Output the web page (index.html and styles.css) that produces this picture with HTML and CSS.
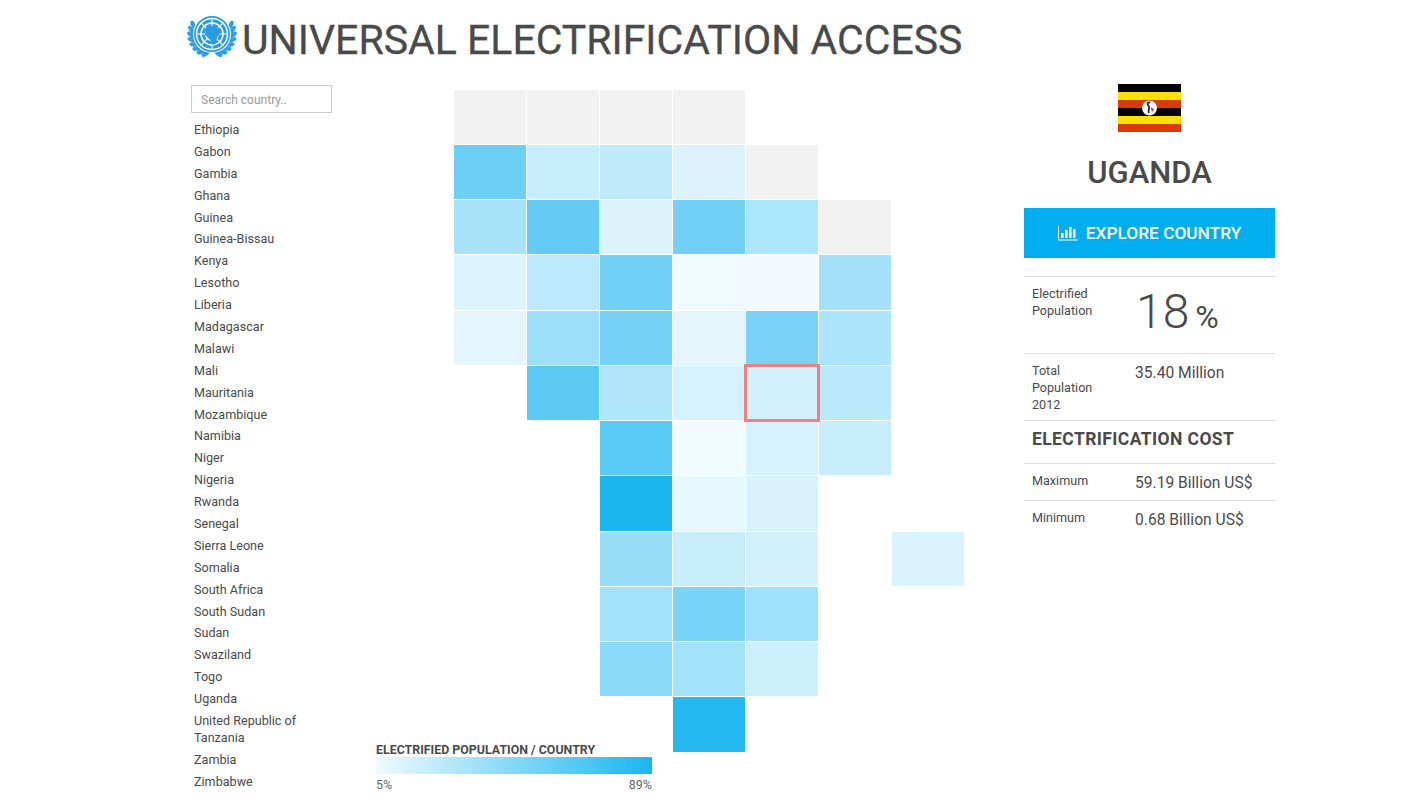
FILE: index.html
```html
<!DOCTYPE html>
<html lang="en">
<head>
<meta charset="UTF-8" />
<meta name="viewport" content="width=device-width, initial-scale=1" />
<title>Universal Electrification Access</title>
<link rel="stylesheet" href="styles.css">
</head>
<body>

<div class="page">
  <header class="top">
    <svg class="logo" viewBox="0 0 52 45" aria-label="United Nations emblem">
      <g fill="#2f9fe4">
        <ellipse cx="26" cy="-2" rx="2.200" ry="4.500" transform="rotate(64 26 19) rotate(-40 26 -2)"/>
        <ellipse cx="26" cy="-2" rx="2.200" ry="4.500" transform="rotate(78 26 19) rotate(-40 26 -2)"/>
        <ellipse cx="26" cy="-2" rx="2.200" ry="4.500" transform="rotate(92 26 19) rotate(-40 26 -2)"/>
        <ellipse cx="26" cy="-2" rx="2.200" ry="4.500" transform="rotate(106 26 19) rotate(-40 26 -2)"/>
        <ellipse cx="26" cy="-2" rx="2.200" ry="4.500" transform="rotate(120 26 19) rotate(-40 26 -2)"/>
        <ellipse cx="26" cy="-2" rx="2.200" ry="4.500" transform="rotate(134 26 19) rotate(-40 26 -2)"/>
        <ellipse cx="26" cy="-2" rx="2.200" ry="4.500" transform="rotate(148 26 19) rotate(-40 26 -2)"/>
        <ellipse cx="26" cy="-2" rx="2.200" ry="4.500" transform="rotate(162 26 19) rotate(-40 26 -2)"/>
        <ellipse cx="26" cy="-2" rx="2.200" ry="4.500" transform="rotate(-64 26 19) rotate(40 26 -2)"/>
        <ellipse cx="26" cy="-2" rx="2.200" ry="4.500" transform="rotate(-78 26 19) rotate(40 26 -2)"/>
        <ellipse cx="26" cy="-2" rx="2.200" ry="4.500" transform="rotate(-92 26 19) rotate(40 26 -2)"/>
        <ellipse cx="26" cy="-2" rx="2.200" ry="4.500" transform="rotate(-106 26 19) rotate(40 26 -2)"/>
        <ellipse cx="26" cy="-2" rx="2.200" ry="4.500" transform="rotate(-120 26 19) rotate(40 26 -2)"/>
        <ellipse cx="26" cy="-2" rx="2.200" ry="4.500" transform="rotate(-134 26 19) rotate(40 26 -2)"/>
        <ellipse cx="26" cy="-2" rx="2.200" ry="4.500" transform="rotate(-148 26 19) rotate(40 26 -2)"/>
        <ellipse cx="26" cy="-2" rx="2.200" ry="4.500" transform="rotate(-162 26 19) rotate(40 26 -2)"/>
      </g>
      <circle cx="26" cy="19" r="19" fill="#fff"/>
      <circle cx="26" cy="19" r="18" fill="#2a9be0"/>
      <g fill="none" stroke="#fff">
        <circle cx="26" cy="19" r="15.500" stroke-width="1.500"/>
        <circle cx="26" cy="19" r="11" stroke-width="1.500"/>
        <circle cx="26" cy="19" r="6.500" stroke-width="1.300"/>
        <path d="M26 3v32M10 19h32M14.700 7.700l22.600 22.600M37.300 7.700L14.700 30.300" stroke-width="1.100"/>
      </g>
      <path d="M20 13l6-2 6 2 2 5-3 5-2 6-3 1-2-6-5-4z" fill="#2a9be0"/>
    </svg>
    <h1 class="title">UNIVERSAL ELECTRIFICATION ACCESS</h1>
  </header>

  <div class="content">
    <aside class="sidebar">
      <input class="search" type="text" placeholder="Search country..">
      <ul class="countries">
        <li>Ethiopia</li>
        <li>Gabon</li>
        <li>Gambia</li>
        <li>Ghana</li>
        <li>Guinea</li>
        <li>Guinea-Bissau</li>
        <li>Kenya</li>
        <li>Lesotho</li>
        <li>Liberia</li>
        <li>Madagascar</li>
        <li>Malawi</li>
        <li>Mali</li>
        <li>Mauritania</li>
        <li>Mozambique</li>
        <li>Namibia</li>
        <li>Niger</li>
        <li>Nigeria</li>
        <li>Rwanda</li>
        <li>Senegal</li>
        <li>Sierra Leone</li>
        <li>Somalia</li>
        <li>South Africa</li>
        <li>South Sudan</li>
        <li>Sudan</li>
        <li>Swaziland</li>
        <li>Togo</li>
        <li>Uganda</li>
        <li>United Republic of Tanzania</li>
        <li>Zambia</li>
        <li>Zimbabwe</li>
      </ul>
    </aside>

    <main class="map">
      <div class="tiles">
        <!-- row 1 -->
        <div class="tile nodata"></div><div class="tile nodata"></div><div class="tile nodata"></div><div class="tile nodata"></div><div></div><div></div><div></div>
        <!-- row 2 -->
        <div class="tile" style="background:#6fd0f5"></div><div class="tile" style="background:#c8edfc"></div><div class="tile" style="background:#c0e9fa"></div><div class="tile" style="background:#dcf3fd"></div><div class="tile nodata"></div><div></div><div></div>
        <!-- row 3 -->
        <div class="tile" style="background:#a8e2f9"></div><div class="tile" style="background:#64cbf5"></div><div class="tile" style="background:#dcf3fc"></div><div class="tile" style="background:#72cff5"></div><div class="tile" style="background:#ace6fb"></div><div class="tile nodata"></div><div></div>
        <!-- row 4 -->
        <div class="tile" style="background:#dcf4fe"></div><div class="tile" style="background:#bce9fb"></div><div class="tile" style="background:#70d0f6"></div><div class="tile" style="background:#f0faff"></div><div class="tile" style="background:#f3fbfe"></div><div class="tile" style="background:#a4e1f9"></div><div></div>
        <!-- row 5 -->
        <div class="tile" style="background:#e5f6fe"></div><div class="tile" style="background:#9ee0fa"></div><div class="tile" style="background:#76d1f6"></div><div class="tile" style="background:#e4f5fc"></div><div class="tile" style="background:#7ad3f6"></div><div class="tile" style="background:#ace5fb"></div><div></div>
        <!-- row 6 -->
        <div></div><div class="tile" style="background:#5cc9f4"></div><div class="tile" style="background:#afe6fa"></div><div class="tile" style="background:#d5f1fd"></div><div class="tile selected" style="background:#d2f0fc"></div><div class="tile" style="background:#bce9fa"></div><div></div>
        <!-- row 7 -->
        <div></div><div></div><div class="tile" style="background:#59c9f5"></div><div class="tile" style="background:#f1faff"></div><div class="tile" style="background:#d5f1fd"></div><div class="tile" style="background:#c8edfc"></div><div></div>
        <!-- row 8 -->
        <div></div><div></div><div class="tile" style="background:#1ab6f0"></div><div class="tile" style="background:#e6f7fe"></div><div class="tile" style="background:#d8f2fd"></div><div></div><div></div>
        <!-- row 9 -->
        <div></div><div></div><div class="tile" style="background:#98def9"></div><div class="tile" style="background:#c8edfb"></div><div class="tile" style="background:#d2f0fc"></div><div></div><div class="tile" style="background:#dbf3fd"></div>
        <!-- row 10 -->
        <div></div><div></div><div class="tile" style="background:#a2e2fb"></div><div class="tile" style="background:#78d3f7"></div><div class="tile" style="background:#9fe0fa"></div><div></div><div></div>
        <!-- row 11 -->
        <div></div><div></div><div class="tile" style="background:#8adbf9"></div><div class="tile" style="background:#a2e2fb"></div><div class="tile" style="background:#cdeffc"></div><div></div><div></div>
        <!-- row 12 -->
        <div></div><div></div><div></div><div class="tile" style="background:#26b9f1"></div><div></div><div></div><div></div>
      </div>

      <div class="legend">
        <div class="legend-title">ELECTRIFIED POPULATION / COUNTRY</div>
        <div class="legend-bar"></div>
        <div class="legend-labels"><span>5%</span><span>89%</span></div>
      </div>
    </main>

    <section class="details">
      <svg class="flag" viewBox="0 0 63 48" aria-label="Flag of Uganda">
        <rect width="63" height="8" y="0" fill="#000"/>
        <rect width="63" height="8" y="8" fill="#fce100"/>
        <rect width="63" height="8" y="16" fill="#d93a06"/>
        <rect width="63" height="8" y="24" fill="#000"/>
        <rect width="63" height="8" y="32" fill="#fce100"/>
        <rect width="63" height="8" y="40" fill="#d93a06"/>
        <circle cx="31.500" cy="24" r="7.500" fill="#fff"/>
        <path d="M32 18.500c-2.500-.5-3 1.500-2 2.500 1 1.500 2 2 1 4-.5 1.500-1 2.500 0 4" fill="none" stroke="#222" stroke-width="1.800"/>
        <path d="M32.500 23l3.500 2-2 3z" fill="#d93a06"/>
      </svg>
      <h2 class="country-name">UGANDA</h2>
      <a class="explore" href="#">
        <svg class="explore-icon" viewBox="0 0 20 16">
          <path d="M.5 1v14H20" fill="none" stroke="#fff" stroke-width="1"/>
          <path d="M3 8h2.500v5H3zM7 5h2.500v8H7zM11 2h2.500v11H11zM15 4h2.500v9H15z" fill="#fff"/>
        </svg>
        EXPLORE COUNTRY
      </a>
      <div class="row row-rate">
        <div class="label">Electrified Population</div>
        <div class="rate">18<span class="rate-unit">%</span></div>
      </div>
      <div class="row row-total">
        <div class="label">Total Population 2012</div>
        <div class="value">35.40 Million</div>
      </div>
      <h3 class="cost-title">ELECTRIFICATION COST</h3>
      <div class="row row-cost">
        <div class="label">Maximum</div>
        <div class="value">59.19 Billion US$</div>
      </div>
      <div class="row row-cost row-last">
        <div class="label">Minimum</div>
        <div class="value">0.68 Billion US$</div>
      </div>
    </section>
  </div>
</div>

</body>
</html>
```

FILE: styles.css
```css
* {
  box-sizing: border-box;
}
body {
  margin: 0;
  background-color: #fff;
  color: #4a4a4a;
  font-family: Roboto, "Liberation Sans", sans-serif;
  overflow: hidden;
}
.page {
  width: 1089px;
  margin-left: 186px;
}
.top {
  display: flex;
  align-items: flex-start;
  gap: 4px;
  height: 84px;
  padding-top: 15px;
}
.logo {
  width: 52px;
  height: 45px;
  flex: none;
}
.title {
  margin: 1px 0 0;
  font-size: 41px;
  font-weight: 400;
  line-height: 48px;
  white-space: nowrap;
  -webkit-text-stroke: .3px #4a4a4a;
}
.content {
  display: flex;
}

/* country list */
.sidebar {
  width: 141px;
  margin: 1px 0 0 5px;
  flex: none;
}
.search {
  display: block;
  width: 141px;
  height: 28px;
  padding: 1px 9px 0;
  border: 1px solid #ccc;
  font-family: inherit;
  font-size: 12px;
  color: #4a4a4a;
  outline: none;
}
.search::placeholder {
  color: #999;
  opacity: 1;
}
.countries {
  list-style: none;
  margin: 8px 0 0;
  padding: 0 0 0 3px;
  font-size: 12.6px;
  line-height: 17px;
}
.countries li {
  margin-bottom: 4.9px;
}

/* tile map */
.map {
  position: relative;
  width: 561px;
  margin: 5.7px 0 0 0;
  padding-left: 122px;
  flex: none;
}
.tiles {
  display: grid;
  grid-template-columns: repeat(7, 72px);
  grid-auto-rows: 54.25px;
  gap: 1px;
}
.tile {
  background-color: #ccc;
}
.nodata {
  background-color: #f1f1f1;
}
.selected {
  outline: 3px solid #ee8080;
  outline-offset: -1px;
  position: relative;
}
.legend {
  position: absolute;
  left: 44px;
  top: 653px;
  width: 276px;
}
.legend-title {
  font-size: 12.4px;
  font-weight: 700;
  line-height: 14px;
}
.legend-bar {
  height: 17px;
  background: linear-gradient(90deg, #effaff, #1ab6f0);
}
.legend-labels {
  display: flex;
  justify-content: space-between;
  margin-top: 4px;
  font-size: 12.5px;
  line-height: 14px;
  color: #666;
}

/* right column */
.details {
  width: 251px;
  margin-left: auto;
  flex: none;
}
.flag {
  display: block;
  width: 63px;
  height: 48px;
  margin: 0 auto;
}
.country-name {
  margin: 23px 0 18px;
  font-size: 31px;
  font-weight: 500;
  line-height: 35px;
  text-align: center;
}
.explore {
  display: flex;
  align-items: center;
  justify-content: center;
  gap: 8px;
  height: 50px;
  margin-bottom: 18px;
  background-color: #00aeef;
  color: #fff;
  font-size: 17.3px;
  font-weight: 500;
  text-decoration: none;
}
.explore-icon {
  width: 20px;
  height: 16px;
}
.row {
  display: grid;
  grid-template-columns: 103px 1fr;
  padding-left: 8px;
  border-top: 1px solid #ddd;
}
.label {
  padding-top: 8px;
  font-size: 12.6px;
  line-height: 17px;
  width: 76px;
}
.value {
  padding-top: 9px;
  font-size: 15.6px;
  line-height: 20px;
}
.row-rate {
  height: 77px;
}
.rate {
  padding: 8px 0 0 1px;
  font-size: 48px;
  font-weight: 300;
  line-height: 54px;
}
.rate-unit {
  margin-left: 6px;
  font-size: 32px;
  font-weight: 400;
}
.row-total {
  height: 67px;
}
.cost-title {
  height: 43px;
  margin: 0;
  padding: 8px 0 0 8px;
  border-top: 1px solid #ddd;
  font-size: 17.5px;
  font-weight: 700;
  line-height: 20px;
  letter-spacing: .4px;
}
.row-cost {
  height: 37px;
}
```
